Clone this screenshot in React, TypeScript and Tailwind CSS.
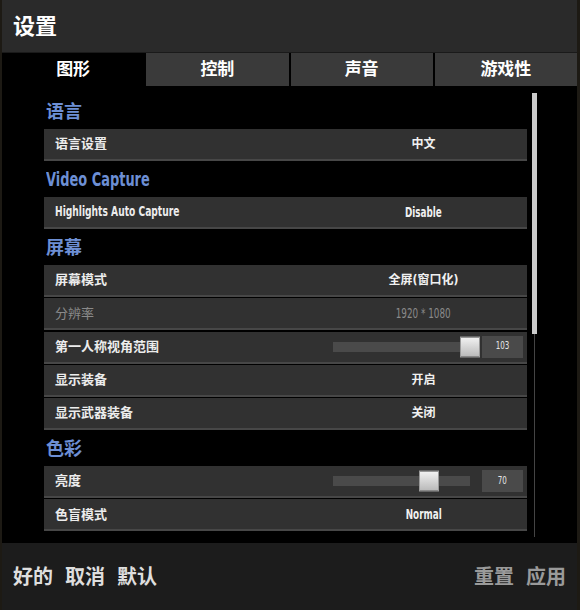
import React from 'react';

type Row =
  | { kind: 'text'; label: string; value: string; disabled?: boolean }
  | { kind: 'slider'; label: string; value: number; pct: number };

interface Section {
  title: string;
  rows: Row[];
}

const sections: Section[] = [
  { title: '语言', rows: [{ kind: 'text', label: '语言设置', value: '中文' }] },
  { title: 'Video Capture', rows: [{ kind: 'text', label: 'Highlights Auto Capture', value: 'Disable' }] },
  {
    title: '屏幕',
    rows: [
      { kind: 'text', label: '屏幕模式', value: '全屏(窗口化)' },
      { kind: 'text', label: '分辨率', value: '1920 * 1080', disabled: true },
      { kind: 'slider', label: '第一人称视角范围', value: 103, pct: 100 },
      { kind: 'text', label: '显示装备', value: '开启' },
      { kind: 'text', label: '显示武器装备', value: '关闭' },
    ],
  },
  {
    title: '色彩',
    rows: [
      { kind: 'slider', label: '亮度', value: 70, pct: 70 },
      { kind: 'text', label: '色盲模式', value: 'Normal' },
    ],
  },
];

const tabs = ['图形', '控制', '声音', '游戏性'];

const font = {
  fontFamily: '"DejaVu Sans Condensed", "Noto Sans CJK SC", sans-serif',
};

// the game uses a tall narrow latin face; squeeze latin strings to match
const isLatin = (s: string) => /^[\x00-\x7f]+$/.test(s);

const Txt: React.FC<{ text: string; latin: string }> = ({ text, latin }) =>
  isLatin(text) ? <span className={`inline-block ${latin}`}>{text}</span> : <>{text}</>;

const SettingRow: React.FC<{ row: Row }> = ({ row }) => (
  <div className="flex h-[32px] items-center bg-[#313131] border-b-2 border-[#474747]">
    <div
      className={`w-[276px] pl-[11px] text-[13px] font-bold ${
        row.kind === 'text' && row.disabled ? 'text-[#8a8a8a] font-normal' : 'text-[#ececec]'
      }`}
    >
      <Txt text={row.label} latin="text-[14.5px] scale-x-[0.7] origin-left" />
    </div>
    {row.kind === 'text' ? (
      <div
        className={`flex-1 text-center text-[12px] ${
          row.disabled ? 'text-[#8a8a8a]' : 'text-[#f0f0f0] font-bold'
        }`}
      >
        <Txt text={row.value} latin="text-[14px] scale-x-[0.7] origin-center" />
      </div>
    ) : (
      <div className="flex flex-1 items-center pl-[13px]">
        <div className="relative h-[10px] w-[137px] bg-[#4a4a4a]">
          <div
            className="absolute top-1/2 h-[21px] w-[20px] -translate-x-1/2 -translate-y-1/2 bg-gradient-to-b from-[#f2f2f2] to-[#b9b9b9] border border-[#9a9a9a]"
            style={{ left: `${row.pct}%` }}
          />
        </div>
        <div className="ml-[12px] flex h-[22px] w-[41px] items-center justify-center bg-[#4a4a4a] text-[11px] text-[#e6e6e6]">
          <span className="inline-block scale-x-[0.72]">{row.value}</span>
        </div>
      </div>
    )}
  </div>
);

export default function App() {
  return (
    <div className="h-[610px] w-[580px] bg-[#1d1a14] px-[2px] overflow-hidden" style={font}>
      <div className="flex h-full w-[575px] flex-col">
        {/* Header */}
        <div className="flex h-[53px] items-center bg-[#2a2a2a] pl-[11px] border-b border-[#1a1a1a]">
          <span className="text-[22px] font-bold text-white">设置</span>
        </div>

        {/* Tabs */}
        <div className="flex h-[33px] gap-[2px] bg-black">
          {tabs.map((t, i) => (
            <div
              key={t}
              className={`flex flex-1 items-center justify-center text-[17px] font-bold text-white ${
                i === 0 ? 'bg-black' : 'bg-[#3a3a3a]'
              }`}
            >
              {t}
            </div>
          ))}
        </div>

        {/* Content */}
        <div className="flex flex-1 bg-black pt-[7px]">
          <div className="ml-[42px] flex w-[483px] flex-col">
            {sections.map((s) => (
              <div key={s.title}>
                <div className="flex h-[36px] items-center pl-[2px] text-[18px] font-bold text-[#6d8fd4]">
                  <Txt text={s.title} latin="text-[20px] scale-x-[0.72] origin-left" />
                </div>
                <div className="flex flex-col gap-[1.25px]">
                  {s.rows.map((r) => (
                    <SettingRow key={r.label} row={r} />
                  ))}
                </div>
              </div>
            ))}
          </div>
          {/* Scrollbar */}
          <div className="ml-[5px] flex w-[5px] flex-col items-center">
            <div className="h-[241px] w-[5px] bg-[#cbcbcb]" />
            <div className="h-[203px] w-[1px] bg-[#444]" />
          </div>
        </div>

        {/* Footer */}
        <div className="flex h-[67px] items-center justify-between bg-[#1c1c1c] px-[11px]">
          <div className="flex gap-[12px] text-[20px] font-semibold text-[#dedede]">
            <span>好的</span>
            <span>取消</span>
            <span>默认</span>
          </div>
          <div className="flex gap-[12px] text-[20px] font-semibold text-[#9a9a9a]">
            <span>重置</span>
            <span>应用</span>
          </div>
        </div>
      </div>
    </div>
  );
}
